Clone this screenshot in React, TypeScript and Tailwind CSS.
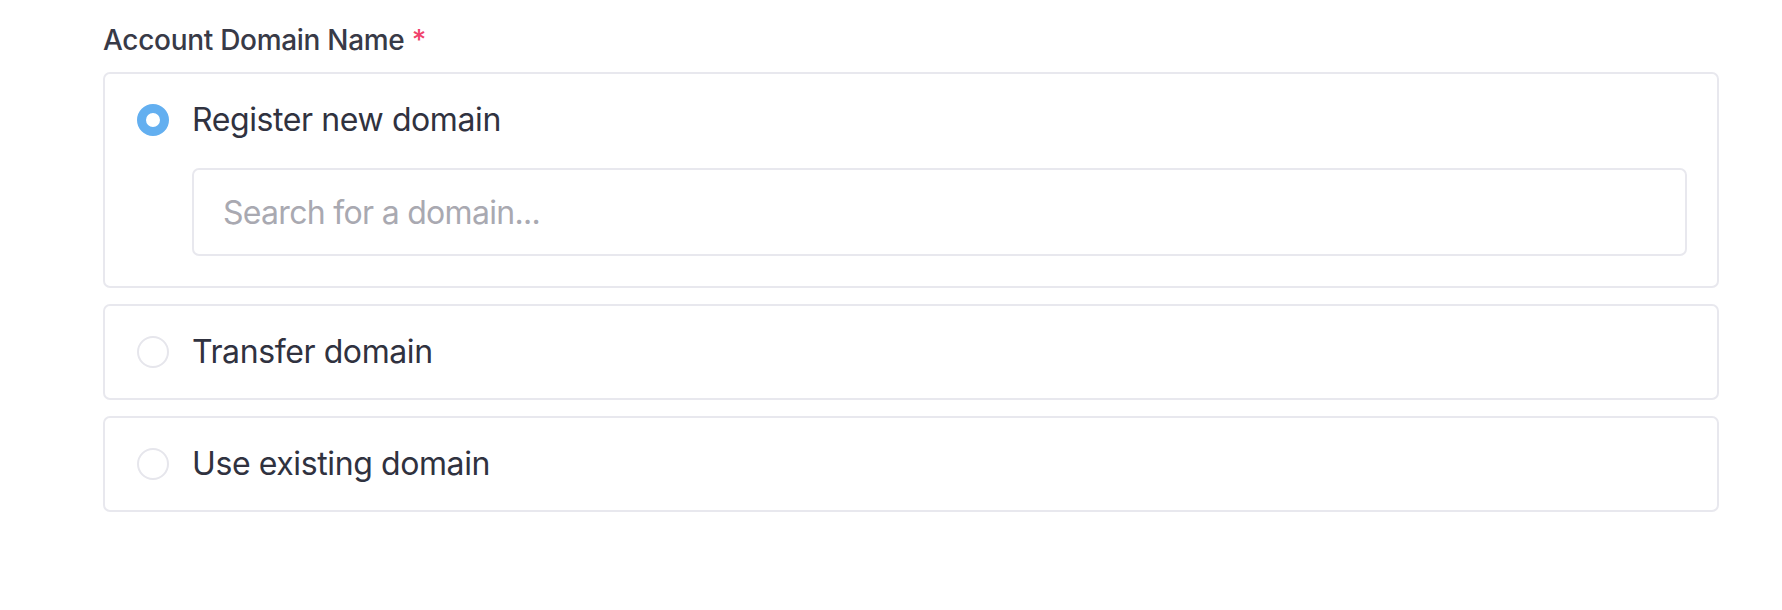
import React from "react";

function Radio({ checked }: { checked: boolean }) {
  return checked ? (
    <span className="box-border block h-[32px] w-[32px] shrink-0 rounded-full border-[9px] border-[#63aff0] bg-white" />
  ) : (
    <span className="box-border block h-[32px] w-[32px] shrink-0 rounded-full border-2 border-[#e6e6ec] bg-white" />
  );
}

function Option({ label, checked, children }: { label: string; checked: boolean; children?: React.ReactNode }) {
  return (
    <div className="rounded-[7px] border-2 border-[#e8e8ee] bg-white pl-[32px] pr-[30px] pt-[22px] pb-[22px]">
      <div className="flex h-[48px] items-center gap-[23px]">
        <Radio checked={checked} />
        <span className="text-[32px] leading-[48px] tracking-[-0.4px] text-[#30323f]">{label}</span>
      </div>
      {children}
    </div>
  );
}

export default function App() {
  return (
    <div className="min-h-[610px] bg-white pt-[20px] pl-[103px] pr-[63px]" style={{ fontFamily: "Inter, 'Noto Sans', sans-serif" }}>
      <div className="mb-[12px] text-[28px] font-medium leading-[40px] tracking-[-0.3px] text-[#383a47]">
        Account Domain Name <span className="text-[#f0426c]">*</span>
      </div>
      <div className="flex flex-col gap-[16px]">
        <Option label="Register new domain" checked>
          <div className="ml-[55px] mt-[24px] pb-[8px]">
            <input
              type="text"
              placeholder="Search for a domain..."
              className="box-border block h-[88px] w-full rounded-[7px] border-2 border-[#e8e8ee] bg-white pl-[29px] pr-[30px] text-[32px] tracking-[-0.7px] text-[#30323f] outline-none placeholder:text-[#a9a9b1]"
            />
          </div>
        </Option>
        <Option label="Transfer domain" checked={false} />
        <Option label="Use existing domain" checked={false} />
      </div>
    </div>
  );
}
